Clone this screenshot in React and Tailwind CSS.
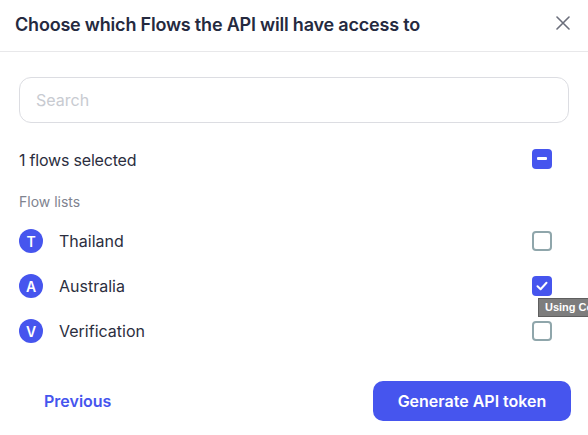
import React from "react";

const rows = [
  { l: "T", name: "Thailand", checked: false },
  { l: "A", name: "Australia", checked: true },
  { l: "V", name: "Verification", checked: false },
];

function Box({ checked }) {
  if (checked)
    return (
      <div className="w-5 h-5 rounded-[4px] bg-[#4655ee] flex items-center justify-center">
        <svg width="14" height="14" viewBox="0 0 14 14" fill="none">
          <path d="M2.5 7.3 L5.6 10.2 L11.5 3.8" stroke="white" strokeWidth="2" strokeLinecap="round" strokeLinejoin="round" />
        </svg>
      </div>
    );
  return <div className="w-5 h-5 rounded-[4px] border-2 border-[#8fa6ab] bg-white" />;
}

export default function App() {
  return (
    <div className="w-[588px] h-[435px] bg-white overflow-hidden relative" style={{ fontFamily: "Inter, 'Noto Sans', sans-serif" }}>
      <div className="h-[52px] border-b border-[#e8e8ea] flex items-center justify-between pl-[15px] pr-[18px] pb-[2px]">
        <div className="text-[18px] font-semibold text-[#252a3f] tracking-[-0.2px]">Choose which Flows the API will have access to</div>
        <svg width="14" height="14" viewBox="0 0 14 14" className="mb-[4px]">
          <path d="M1 1 L13 13 M13 1 L1 13" stroke="#6b6e7b" strokeWidth="1.6" strokeLinecap="round" />
        </svg>
      </div>
      <div className="px-[19px]">
        <div className="mt-[25px] h-[46px] rounded-[12px] border border-[#dcdde2] flex items-center px-[16px]">
          <span className="text-[16px] text-[#c8cbd1]">Search</span>
        </div>
        <div className="mt-[25px] flex items-center justify-between pr-[17px]">
          <span className="text-[16px] text-[#2b2e40] tracking-[-0.2px]">1 flows selected</span>
          <div className="w-5 h-5 rounded-[4px] bg-[#4655ee] flex items-center justify-center mt-[-3px]">
            <div className="w-[10px] h-[3px] bg-white rounded-[1px]" />
          </div>
        </div>
        <div className="mt-[20px] text-[14px] text-[#80838f] leading-[20px]">Flow lists</div>
        <div className="mt-[17px] flex flex-col gap-[21px]">
          {rows.map((r) => (
            <div key={r.name} className="h-[24px] flex items-center justify-between pr-[17px] relative">
              <div className="flex items-center">
                <div className="w-6 h-6 rounded-full bg-[#4655ee] text-white text-[14px] font-semibold flex items-center justify-center">{r.l}</div>
                <span className="ml-[16px] text-[16px] text-[#2b2e40]">{r.name}</span>
              </div>
              <Box checked={r.checked} />
              {r.checked && (
                <div className="absolute left-[519px] top-[24px] h-[19px] bg-[#7d7d7d] border border-[#5f5f5f] text-white text-[11px] font-bold pl-[6px] flex items-center whitespace-nowrap w-[51px] overflow-hidden" style={{ fontFamily: "'Liberation Sans', Arial, sans-serif" }}>
                  Using Co
                </div>
              )}
            </div>
          ))}
        </div>
      </div>
      <div className="mt-[38px] flex items-center justify-between pl-[44px] pr-[17px]">
        <span className="text-[16px] font-semibold text-[#4655ee]">Previous</span>
        <div className="w-[198px] h-[40px] rounded-[10px] bg-[#4655ee] text-white text-[16px] font-semibold flex items-center justify-center">Generate API token</div>
      </div>
    </div>
  );
}
